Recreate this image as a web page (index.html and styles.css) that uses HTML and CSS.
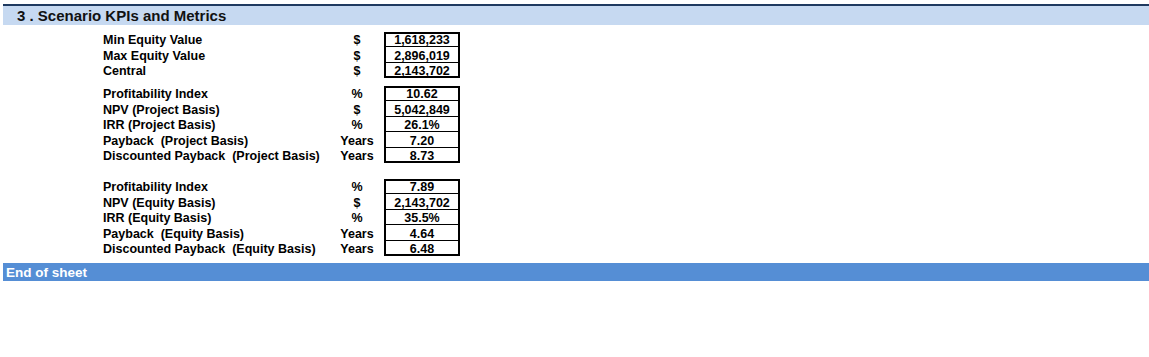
FILE: index.html
```html
<!DOCTYPE html>
<html>
<head>
<meta charset="utf-8">
<link rel="stylesheet" href="styles.css">
</head>
<body>
<div class="rule"></div>
<div class="section-head">3 . Scenario KPIs and Metrics</div>

<div class="block b1">
  <div class="label">Min Equity Value</div><div class="unit">$</div><div class="val first">1,618,233</div>
  <div class="label">Max Equity Value</div><div class="unit">$</div><div class="val">2,896,019</div>
  <div class="label">Central</div><div class="unit">$</div><div class="val last">2,143,702</div>
</div>

<div class="block b2">
  <div class="label">Profitability Index</div><div class="unit">%</div><div class="val first">10.62</div>
  <div class="label">NPV (Project Basis)</div><div class="unit">$</div><div class="val">5,042,849</div>
  <div class="label">IRR (Project Basis)</div><div class="unit">%</div><div class="val">26.1%</div>
  <div class="label">Payback&nbsp; (Project Basis)</div><div class="unit">Years</div><div class="val">7.20</div>
  <div class="label">Discounted Payback&nbsp; (Project Basis)</div><div class="unit">Years</div><div class="val last">8.73</div>
</div>

<div class="block b3">
  <div class="label">Profitability Index</div><div class="unit">%</div><div class="val first">7.89</div>
  <div class="label">NPV (Equity Basis)</div><div class="unit">$</div><div class="val">2,143,702</div>
  <div class="label">IRR (Equity Basis)</div><div class="unit">%</div><div class="val">35.5%</div>
  <div class="label">Payback&nbsp; (Equity Basis)</div><div class="unit">Years</div><div class="val">4.64</div>
  <div class="label">Discounted Payback&nbsp; (Equity Basis)</div><div class="unit">Years</div><div class="val last">6.48</div>
</div>

<div class="end-band">End of sheet</div>
</body>
</html>
```
FILE: styles.css
```css
html, body {
  margin: 0;
  padding: 0;
  background: #ffffff;
}
body {
  font-family: "Liberation Sans", Arial, sans-serif;
  font-weight: bold;
  color: #000;
  width: 1149px;
  height: 357px;
  overflow: hidden;
}
.rule {
  margin: 4px 0 0 3px;
  height: 2px;
  background: #1f3a60;
}
.section-head {
  margin-left: 3px;
  height: 19px;
  background: #c6d9f1;
  font-size: 15px;
  line-height: 20px;
  padding-left: 14px;
  color: #111;
}
.block {
  display: grid;
  grid-template-columns: 230px 48px 3px 76px;
  padding-left: 103px;
  font-size: 12.5px;
  line-height: 14px;
}
.b1 { margin-top: 7px; grid-auto-rows: 15.33px; }
.b2 { margin-top: 8px; grid-auto-rows: 15.4px; }
.b3 { margin-top: 16px; grid-auto-rows: 15.4px; }
.label {
  grid-column: 1;
  white-space: pre;
  display: flex;
  align-items: flex-end;
}
.unit {
  grid-column: 2;
  display: flex;
  align-items: flex-end;
  justify-content: center;
}
.val {
  grid-column: 4;
  display: flex;
  align-items: flex-end;
  justify-content: center;
  box-shadow: inset 2px 0 #000, inset -2px 0 #000, inset 0 -1px #000;
}
.val.first {
  box-shadow: inset 2px 0 #000, inset -2px 0 #000, inset 0 -1px #000, inset 0 2px #000;
}
.val.last {
  box-shadow: inset 2px 0 #000, inset -2px 0 #000, inset 0 -2px #000;
}
.end-band {
  margin: 7px 0 0 3px;
  height: 18px;
  background: #558ed5;
  color: #fff;
  font-size: 13.5px;
  line-height: 19px;
  padding-left: 3px;
}
```
